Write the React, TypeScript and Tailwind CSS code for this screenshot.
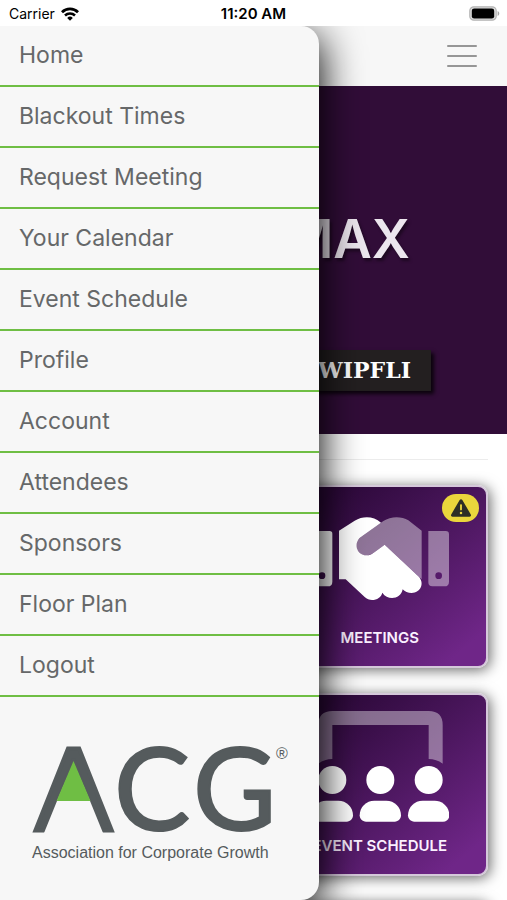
import type { ReactNode } from "react";
import { FaTriangleExclamation } from "react-icons/fa6";

const menuItems = [
  "Home",
  "Blackout Times",
  "Request Meeting",
  "Your Calendar",
  "Event Schedule",
  "Profile",
  "Account",
  "Attendees",
  "Sponsors",
  "Floor Plan",
  "Logout",
];

function WifiIcon() {
  return (
    <svg viewBox="0 0 18 14" className="w-[18px] h-[14px]" fill="none" aria-hidden="true">
      <path d="M1 5.2a11.4 11.4 0 0 1 16 0" stroke="#000" strokeWidth="2.8" />
      <path d="M4 8.5a7.1 7.1 0 0 1 10 0" stroke="#000" strokeWidth="2.5" />
      <path d="M6.2 10.9a4 4 0 0 1 5.6 0L9 13.8z" fill="#000" />
    </svg>
  );
}

function BatteryIcon() {
  return (
    <svg viewBox="0 0 31 15" className="w-[31px] h-[15px]" aria-hidden="true">
      <rect x="0.8" y="0.8" width="26.4" height="13.4" rx="4" fill="#ddd" stroke="#b4b4b4" strokeWidth="1.2" />
      <rect x="2.8" y="2.4" width="22.4" height="10.2" rx="2.4" fill="#000" />
      <path d="M28.6 5c2.2.8 2.2 4.2 0 5z" fill="#a6a6a6" />
    </svg>
  );
}

function StatusBar() {
  return (
    <div className="relative z-20 grid grid-cols-3 items-center h-[26px] shrink-0 bg-white px-[7px] pt-[1px] text-sm text-black">
      <div className="flex items-center gap-[6px] pl-[2px]">
        <span>Carrier</span>
        <WifiIcon />
      </div>
      <span className="text-center text-[15px] font-semibold">11:20 AM</span>
      <div className="flex justify-end">
        <BatteryIcon />
      </div>
    </div>
  );
}

function HandshakeIcon() {
  return (
    <svg viewBox="33 98 414 333" className="w-[138px] h-[111px]" fill="#fff" aria-hidden="true">
      <path
        fillRule="evenodd"
        d="M33 182H89Q97 182 97 190V334Q97 348 83 348H47Q33 348 33 334ZM66 306a10 10 0 1 0 0 20 10 10 0 0 0 0-20Z"
      />
      <path d="M117 181L164 151C190 136 220 137 243 157L183 200C160 216 168 255 200 255C208 255 214 252 220 248L254 223L355 318C376 339 361 368 335 368C324 368 314 364 308 357C303 386 264 393 247 367C243 388 211 397 194 380L137 327H117Z" />
      <g fillOpacity="0.42">
        <path d="M183 200L250 152C272 137 305 137 325 150L365 181V327L254 223L220 248C195 266 168 248 168 226C168 214 174 206 183 200Z" />
        <path
          fillRule="evenodd"
          d="M385 182H437Q447 182 447 192V334Q447 348 433 348H397Q385 348 385 336ZM416 306a10 10 0 1 0 0 20 10 10 0 0 0 0-20Z"
        />
      </g>
    </svg>
  );
}

function ScreenUsersIcon() {
  return (
    <svg viewBox="33 92 414 333" className="w-[138px] h-[111px]" fill="#fff" aria-hidden="true">
      <path
        fillOpacity="0.4"
        d="M55 250V134Q55 92 97 92H386Q428 92 428 134V250Q409 236 386 236V134H97V236Q74 236 55 250Z"
      />
      {[97, 241, 386].map((x) => (
        <g key={x} transform={`translate(${x} 0)`}>
          <circle cx="0" cy="299" r="42" />
          <path d="M-62 405C-62 380-42 361-18 361H18C42 361 62 380 62 405C62 416 54 424 43 424H-43C-54 424-62 416-62 405Z" />
        </g>
      ))}
    </svg>
  );
}

function AcgLogo() {
  return (
    <svg viewBox="0 0 260 88" className="w-[260px] h-[88px] overflow-visible" role="img" aria-label="ACG">
      <g fill="#555b5d" stroke="#555b5d" fontFamily="Lato">
        <text x="41.5" y="85" textAnchor="middle" fontSize="114" strokeWidth="4">A</text>
        <text x="82" y="85" fontSize="114" strokeWidth="2">C</text>
        <text x="161" y="85" fontSize="114" strokeWidth="2">G</text>
      </g>
      {/* clears the crossbar so only the green wedge sits between the legs */}
      <path d="M41.5 18L58 56L71 88H12L25 56Z" fill="#f7f7f7" />
      <path d="M41.5 16L58.5 56H24.5Z" fill="#6fbe44" />
      <text x="244" y="14" fill="#555b5d" fontFamily="Liberation Sans" fontSize="16">
        ®
      </text>
    </svg>
  );
}

function Drawer() {
  return (
    <aside className="absolute inset-y-0 left-0 z-10 w-[63%] rounded-r-[18px] bg-[#f7f7f7] shadow-[2px_10px_40px_#000]">
      <nav>
        {menuItems.map((item) => (
          <a
            key={item}
            href="#"
            className="flex items-center h-[61px] border-b-2 border-[#6fbe44] pl-[19px] text-[23px] text-[#666869]"
          >
            {item}
          </a>
        ))}
      </nav>
      <div className="pt-12 pl-8">
        <AcgLogo />
        <p className="mt-2 font-['Liberation_Sans',sans-serif] text-base text-[#555b5d]">
          Association for Corporate Growth
        </p>
      </div>
    </aside>
  );
}

function Hero() {
  return (
    <section className="flex flex-col items-end h-[348px] shrink-0 bg-[#310d38]">
      <h1 className="mt-[121px] mr-[97px] text-[53px] leading-[64px] font-semibold text-[#ece6ee] [text-shadow:2px_3px_3px_#00000066]">
        MAX
      </h1>
      <div className="mt-[79px] mr-[76px] flex items-center h-[41px] bg-[#231f20] px-5 font-['DejaVu_Serif',serif] text-[22px] font-bold text-white shadow-[3px_3px_4px_#000000cc]">
        WIPFLI
      </div>
    </section>
  );
}

function Tile({ icon, label, warning }: { icon?: ReactNode; label?: string; warning?: boolean }) {
  return (
    <button
      type="button"
      className="relative col-start-2 flex flex-col items-center min-h-[183px] rounded-[10px] border-2 border-[#d5c8da] bg-linear-to-br from-[#2c0939] from-15% to-[#6f2688] to-90% pt-4 pb-4 shadow-[2px_2px_14px_#00000099]"
    >
      {icon}
      <span className="mt-3 text-[15px] leading-6 font-semibold text-[#fbf0ff] whitespace-nowrap">{label}</span>
      {warning && (
        <span className="absolute top-[7px] right-[7px] flex items-center justify-center w-[37px] h-7 rounded-full bg-[#ead63c] text-[#2d2e26]">
          <FaTriangleExclamation size={20} />
        </span>
      )}
    </button>
  );
}

export default function App() {
  return (
    <div className="flex flex-col h-screen overflow-hidden bg-white font-['Inter',sans-serif]">
      <StatusBar />
      <div className="relative flex flex-col flex-1 min-h-0">
        <header className="flex items-center justify-end h-[60px] shrink-0 bg-[#f7f7f7] pr-[30px]">
          <button type="button" aria-label="Menu" className="flex flex-col gap-2">
            <span className="w-[30px] h-[2px] rounded-full bg-[#969696]" />
            <span className="w-[30px] h-[2px] rounded-full bg-[#969696]" />
            <span className="w-[30px] h-[2px] rounded-full bg-[#969696]" />
          </button>
        </header>
        <main className="flex flex-col flex-1 min-h-0 overflow-hidden">
          <Hero />
          <hr className="mt-[25px] mx-[19px] border-[#ececec]" />
          <div className="grid grid-cols-2 gap-x-9 gap-y-[25px] mt-[25px] mx-[19px]">
            <Tile icon={<HandshakeIcon />} label="MEETINGS" warning />
            <Tile icon={<ScreenUsersIcon />} label="EVENT SCHEDULE" />
            <Tile />
          </div>
        </main>
        <Drawer />
      </div>
    </div>
  );
}
